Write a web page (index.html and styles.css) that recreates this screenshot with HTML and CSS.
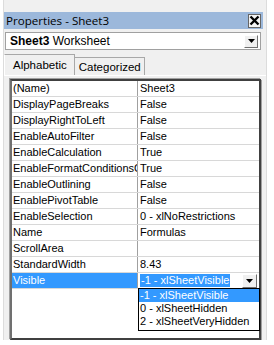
FILE: index.html
```html
<!DOCTYPE html>
<html>
<head>
<meta charset="utf-8">
<link rel="stylesheet" href="styles.css">
</head>
<body>
<div class="window">
  <div class="titlebar">
    <span class="title">Properties - Sheet3</span>
    <span class="close"><svg width="11" height="11" viewBox="0 0 11 11"><path d="M1.5 1.5 L9.5 9.5 M9.5 1.5 L1.5 9.5" stroke="#000" stroke-width="2.4"/></svg></span>
  </div>
  <div class="objcombo">
    <span class="objname"><b>Sheet3</b> Worksheet</span>
    <span class="ddbtn"><svg width="7" height="4" viewBox="0 0 7 4"><path d="M0 0 H7 L3.5 4 Z" fill="#000"/></svg></span>
  </div>
  <div class="tabs">
    <div class="tab active">Alphabetic</div>
    <div class="tab">Categorized</div>
  </div>
  <div class="tabpanel">
    <div class="grid">
      <div class="row"><div class="k">(Name)</div><div class="v">Sheet3</div></div>
      <div class="row"><div class="k">DisplayPageBreaks</div><div class="v">False</div></div>
      <div class="row"><div class="k">DisplayRightToLeft</div><div class="v">False</div></div>
      <div class="row"><div class="k">EnableAutoFilter</div><div class="v">False</div></div>
      <div class="row"><div class="k">EnableCalculation</div><div class="v">True</div></div>
      <div class="row"><div class="k">EnableFormatConditionsCalculation</div><div class="v">True</div></div>
      <div class="row"><div class="k">EnableOutlining</div><div class="v">False</div></div>
      <div class="row"><div class="k">EnablePivotTable</div><div class="v">False</div></div>
      <div class="row"><div class="k">EnableSelection</div><div class="v">0 - xlNoRestrictions</div></div>
      <div class="row"><div class="k">Name</div><div class="v">Formulas</div></div>
      <div class="row"><div class="k">ScrollArea</div><div class="v"></div></div>
      <div class="row"><div class="k">StandardWidth</div><div class="v">8.43</div></div>
      <div class="row sel">
        <div class="k">Visible</div>
        <div class="v edit">
          <span class="seltext">-1 - xlSheetVisible</span>
          <span class="ddbtn small"><svg width="7" height="4" viewBox="0 0 7 4"><path d="M0 0 H7 L3.5 4 Z" fill="#000"/></svg></span>
          <div class="droplist">
            <div class="item hi">-1 - xlSheetVisible</div>
            <div class="item">0 - xlSheetHidden</div>
            <div class="item">2 - xlSheetVeryHidden</div>
          </div>
        </div>
      </div>
    </div>
  </div>
</div>
</body>
</html>
```
FILE: styles.css
```css
html, body {
  margin: 0;
  padding: 0;
  background: #ffffff;
}
body {
  font-family: "Liberation Sans", Arial, sans-serif;
  font-size: 11px;
  color: #000;
}
.window {
  margin-left: 3px;
  width: 264px;
  height: 340px;
  background: #f0f0f0;
  border-left: 1px solid #dcdcdc;
  border-right: 1px solid #dcdcdc;
  padding-top: 12px;
  box-sizing: border-box;
}
.titlebar {
  height: 17px;
  background: #9cb8db;
  display: flex;
  align-items: center;
  justify-content: space-between;
  padding: 0 2px 0 2px;
  margin-right: 3px;
}
.title {
  font-family: "Open Sans", sans-serif;
  font-size: 11.6px;
  color: #000;
}
.close {
  width: 13px;
  height: 14px;
  background: #f4f4f4;
  border: 1px solid #666;
  display: flex;
  align-items: center;
  justify-content: center;
  box-sizing: border-box;
}
.objcombo {
  margin: 3px 5px 0 1px;
  height: 18px;
  background: #fff;
  border: 1px solid #a0a0a0;
  display: flex;
  align-items: center;
  justify-content: space-between;
  padding: 0 2px 0 4px;
  box-sizing: border-box;
  font-size: 12px;
}
.ddbtn {
  width: 14px;
  height: 13px;
  background: #f0f0f0;
  border: 1px solid #fff;
  border-right-color: #707070;
  border-bottom-color: #707070;
  box-sizing: border-box;
  display: flex;
  align-items: center;
  justify-content: center;
}
.tabs {
  display: flex;
  align-items: flex-end;
  margin-top: 4px;
  height: 21px;
  padding-left: 0;
  font-size: 11.5px;
}
.tab {
  height: 18px;
  padding: 0 3px 0 4px;
  border: 1px solid #a8a8a8;
  border-bottom: none;
  border-left: none;
  display: flex;
  align-items: center;
  box-sizing: border-box;
}
.tab.active {
  height: 21px;
  border-left: 1px solid #fff;
  padding: 0 7px 0 8px;
}
.tabpanel {
  border-top: 1px solid #fff;
  padding: 3px 4px 0 4px;
  height: 264px;
  box-sizing: border-box;
}
.grid {
  height: 261px;
  background: #fff;
  border: 2px solid #404040;
  border-left-color: #707070;
  box-shadow: -1px -1px 0 #a0a0a0, 1px 1px 0 #a0a0a0;
  box-sizing: border-box;
  margin-left: 2px;
  margin-right: 1px;
}
.row {
  display: flex;
  height: 16px;
  border-bottom: 1px solid #d8d8d8;
  box-sizing: border-box;
}
.k {
  width: 126px;
  padding-left: 1px;
  border-right: 1px solid #a0a0a0;
  white-space: nowrap;
  overflow: hidden;
  line-height: 15px;
  flex: none;
  box-sizing: border-box;
}
.v {
  flex: 1;
  padding-left: 2px;
  line-height: 15px;
  white-space: nowrap;
  overflow: hidden;
}
.row.sel .k {
  background: #3399ff;
  color: #fff;
}
.v.edit {
  position: relative;
  overflow: visible;
  display: flex;
  align-items: center;
  justify-content: space-between;
  padding-right: 2px;
}
.seltext {
  background: #3399ff;
  color: #fff;
  padding: 0 1px;
  line-height: 13px;
}
.ddbtn.small {
  width: 15px;
  height: 14px;
}
.droplist {
  position: absolute;
  left: 0;
  top: 15px;
  width: 120px;
  background: #fff;
  border: 1px solid #000;
  padding-bottom: 2px;
}
.item {
  height: 13px;
  line-height: 13px;
  padding-left: 1px;
}
.item.hi {
  background: #3399ff;
  color: #fff;
}
```
